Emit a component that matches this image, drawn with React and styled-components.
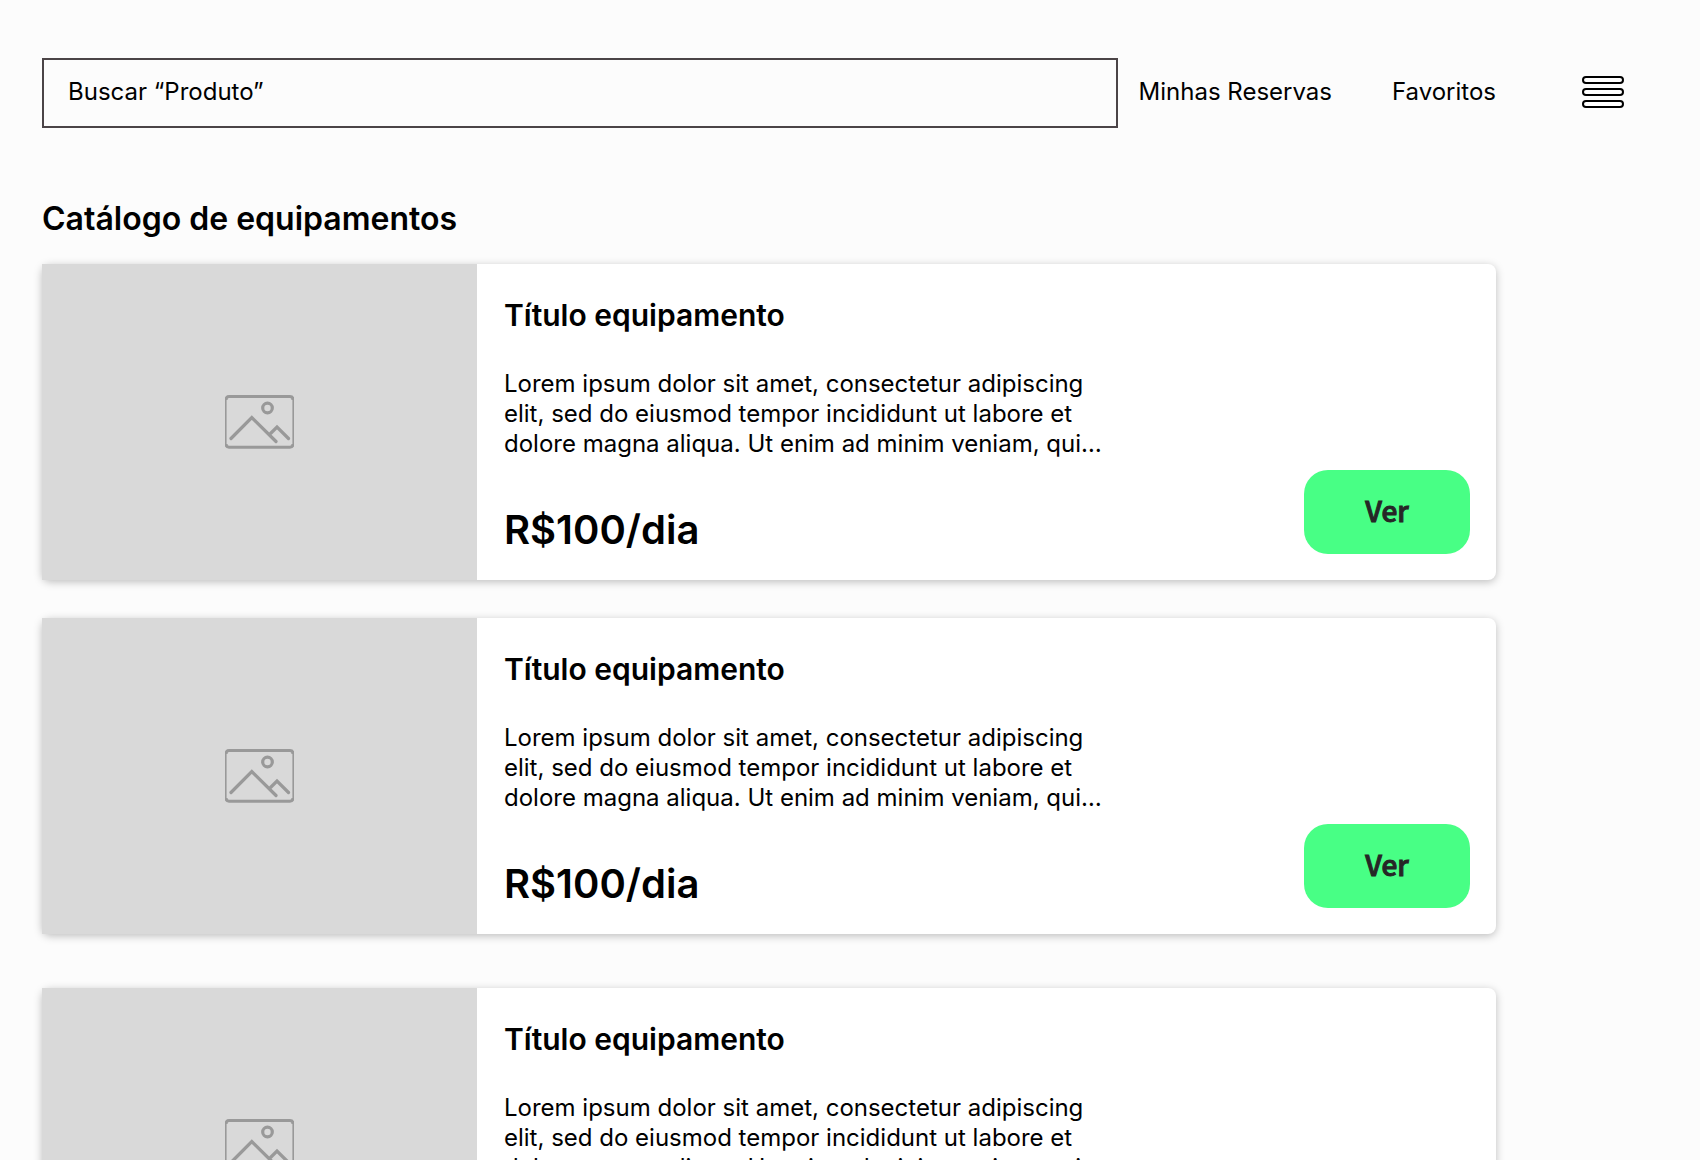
import React from "react";
import styled, { createGlobalStyle } from "styled-components";

const GlobalStyle = createGlobalStyle`
  * {
    box-sizing: border-box;
  }

  body {
    margin: 0;
    background: #fcfcfc;
    color: #000;
    font-family: Inter, "Liberation Sans", sans-serif;
    font-size: 24px;
    line-height: 30px;
  }
`;

const Page = styled.div`
  display: flex;
  flex-direction: column;
  padding: 58px 0 58px 42px;
`;

const Header = styled.header`
  display: grid;
  grid-template-columns: minmax(0, 1fr) 204px;
  align-items: start;
`;

const HeaderMain = styled.div`
  display: flex;
  gap: 21px;
`;

const SearchForm = styled.form`
  display: flex;
  flex: 1;
  min-width: 0;
`;

const SearchInput = styled.input`
  flex: 1;
  min-width: 0;
  height: 70px;
  padding: 0 24px 4px;
  border: 2px solid #4b4447;
  border-radius: 0;
  background: transparent;
  color: #000;
  font: inherit;

  &::placeholder {
    color: #000;
    opacity: 1;
  }
`;

const Nav = styled.nav`
  display: flex;
  align-items: center;
  gap: 60px;
  height: 68px;
`;

const NavLink = styled.a`
  color: inherit;
  text-decoration: none;
  white-space: nowrap;
`;

const MenuButton = styled.button`
  display: flex;
  flex-direction: column;
  justify-content: center;
  justify-self: end;
  gap: 4px;
  height: 68px;
  margin-right: 76px;
  padding: 0;
  border: 0;
  background: none;
  cursor: pointer;
`;

const MenuBar = styled.span`
  width: 42px;
  height: 8px;
  border: 2px solid #000;
  border-radius: 4px;
  background: #fff;
`;

const Main = styled.main`
  margin-right: 204px;
  padding-top: 71px;
`;

const PageTitle = styled.h1`
  margin: 0 0 25px;
  font-size: 32px;
  font-weight: 600;
  line-height: 40px;
`;

const Groups = styled.div`
  display: flex;
  flex-direction: column;
  gap: 54px;
`;

const CardList = styled.div`
  display: flex;
  flex-direction: column;
  gap: 38px;
`;

const Card = styled.article`
  display: flex;
  border-radius: 8px;
  background: #fff;
  box-shadow: 0 2px 8px rgba(0, 0, 0, 0.25);
`;

const Thumbnail = styled.div`
  display: flex;
  flex: 0 0 435px;
  align-items: center;
  justify-content: center;
  background: #d9d9d9;
`;

const CardBody = styled.div`
  display: flex;
  flex: 1;
  align-items: flex-end;
  justify-content: space-between;
  gap: 24px;
  min-width: 0;
  padding: 33px 26px 26px 27px;
`;

const CardTitle = styled.h2`
  margin: 0 0 36px;
  font-size: 30px;
  font-weight: 600;
  line-height: 36px;
`;

const Description = styled.p`
  max-width: 600px;
  margin: 0 0 47px;
`;

const Price = styled.p`
  margin: 0;
  font-size: 40px;
  font-weight: 600;
  line-height: 48px;
`;

const ViewButton = styled.button`
  flex: none;
  width: 166px;
  height: 84px;
  padding: 0 0 4px;
  border: 0;
  border-radius: 24px;
  background: #48ff85;
  color: #262626;
  font-family: "Noto Sans CJK JP", "Noto Sans", sans-serif;
  font-size: 28px;
  font-weight: 500;
  line-height: 36px;
  -webkit-text-stroke: 1px #262626;
  cursor: pointer;
`;

const PictureIcon = () => (
  <svg width="69" height="54" viewBox="0 0 69 54" fill="none" stroke="#999" aria-hidden="true">
    <path d="M0.8 4V50M68.2 4V50" strokeWidth="1.6" />
    <path d="M1 5Q1 1.6 4 1.6H65Q68 1.6 68 5M1 49Q1 52.2 4 52.2H65Q68 52.2 68 49" strokeWidth="3" />
    <circle cx="42.5" cy="13" r="4.8" strokeWidth="3.2" />
    <path d="M6 43.5L26.8 22.5L51 46.5M44.5 39.5L52 32L63.5 43.5" strokeWidth="3.2" strokeLinecap="round" />
  </svg>
);

const featured = [
  { id: 1, title: "Título equipamento", price: "R$100/dia" },
  { id: 2, title: "Título equipamento", price: "R$100/dia" },
];

const more = [{ id: 3, title: "Título equipamento", price: "R$100/dia" }];

const EquipmentCard = ({ title, price }) => (
  <Card>
    <Thumbnail>
      <PictureIcon />
    </Thumbnail>
    <CardBody>
      <div>
        <CardTitle>{title}</CardTitle>
        <Description>
          Lorem ipsum dolor sit amet, consectetur adipiscing elit, sed do eiusmod tempor
          incididunt ut labore et dolore magna aliqua. Ut enim ad minim veniam, qui…
        </Description>
        <Price>{price}</Price>
      </div>
      <ViewButton type="button">Ver</ViewButton>
    </CardBody>
  </Card>
);

export default function App() {
  return (
    <>
      <GlobalStyle />
      <Page>
        <Header>
          <HeaderMain>
            <SearchForm role="search">
              <SearchInput type="text" aria-label="Buscar produto" placeholder="Buscar “Produto”" />
            </SearchForm>
            <Nav>
              <NavLink href="#reservas">Minhas Reservas</NavLink>
              <NavLink href="#favoritos">Favoritos</NavLink>
            </Nav>
          </HeaderMain>
          <MenuButton type="button" aria-label="Menu">
            <MenuBar />
            <MenuBar />
            <MenuBar />
          </MenuButton>
        </Header>
        <Main>
          <PageTitle>Catálogo de equipamentos</PageTitle>
          <Groups>
            <CardList>
              {featured.map((item) => (
                <EquipmentCard key={item.id} {...item} />
              ))}
            </CardList>
            <CardList>
              {more.map((item) => (
                <EquipmentCard key={item.id} {...item} />
              ))}
            </CardList>
          </Groups>
        </Main>
      </Page>
    </>
  );
}
